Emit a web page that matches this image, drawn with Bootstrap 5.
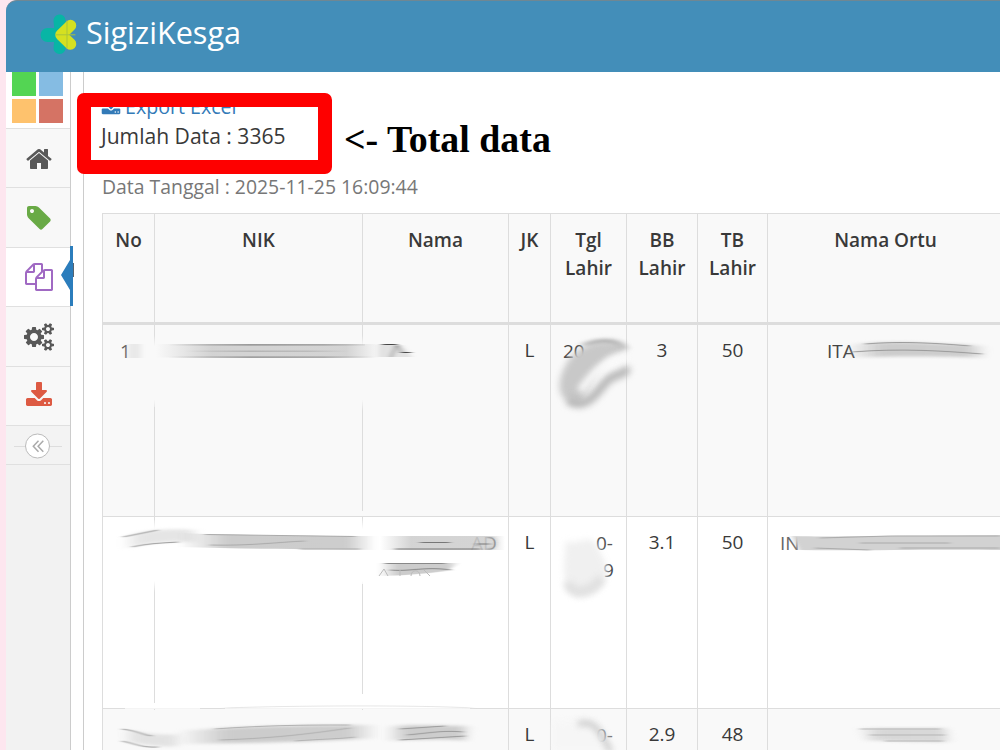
<!DOCTYPE html>
<html lang="id">
<head>
  <meta charset="UTF-8">
  <meta name="viewport" content="width=device-width, initial-scale=1">
  <title>SigiziKesga</title>
  <link href="https://cdn.jsdelivr.net/npm/bootstrap@5.3.0/dist/css/bootstrap.min.css" rel="stylesheet">
  <style>
    body { background: #fde6ef; font-family: "Open Sans", sans-serif; font-size: 20px; line-height: 27.5px; color: #393939; height: 750px; }
    .app { margin-left: 6px; height: 750px; }
    .topbar { height: 72px; background: #438eb9; border-top: 1px solid #6f8793; border-top-left-radius: 11px; padding: 0 0 5px 33px; }
    .brand-name { font-size: 30.6px; line-height: 40px; color: #fff; margin: -4px 0 0 7px; }
    .sidebar { width: 65px; background: #f2f2f2; border-right: 1px solid #ccc; }
    .shortcuts { height: 56px; background: #fff; padding: 0 7px 5px 6px; display: grid; grid-template-columns: 24px 24px; grid-template-rows: 24px 24px; gap: 3px; }
    .menu-item { height: 59.4px; background: #f8f8f8; border-top: 1px solid #e0e0e0; color: #585858; padding: 1px 0 0 2px; }
    .menu-item.current { background: #fff; }
    .marker { left: 55px; top: -2px; }
    .collapse-row { height: 40px; border-top: 1px solid #e0e0e0; border-bottom: 1px solid #e0e0e0; background: #f3f3f3; padding-top: 2px; }
    .page { margin-left: 12px; border-left: 1px solid #ccc; background: #fff; padding: 21px 0 0 17px; min-width: 0; }
    .export-link { color: #337ab7; font-size: 19.6px; }
    .count { font-size: 21.1px; margin-top: 1px; }
    .stamp { color: #777; font-size: 19.4px; margin: 23.5px 0 0 1px; }
    .data-table { width: 901px; table-layout: fixed; margin: 13px 0 0 1px; color: #393939; font-size: 19px; line-height: 27.5px; border-color: #ddd; --bs-table-striped-bg: #f9f9f9; --bs-table-striped-color: #393939; --bs-table-color: #393939; }
    .data-table th { height: 110px; font-weight: 600; padding: 13px 4px; background: #f9f9f9; border-bottom: 3px solid #ddd; }
    .data-table td { height: 192px; padding: 12px 4px; }
    .data-table tbody tr:first-child td { height: 193px; }
    .redbox { left: 77px; top: 93px; width: 255px; height: 81px; border: 14px solid #fe0000; border-radius: 7px; }
    .note { left: 344px; top: 116px; font: bold 37.9px/46px "Liberation Serif", serif; color: #000; white-space: nowrap; }
    .smears { left: 0; top: 0; }
    .smears filter { color-interpolation-filters: sRGB; }
  </style>
</head>
<body class="overflow-hidden position-relative">
  <div class="app d-flex flex-column overflow-hidden">
    <!-- Header -->
    <header class="topbar d-flex align-items-center flex-shrink-0">
      <svg width="40" height="42" viewBox="39 14 40 42" fill="none" stroke-linecap="round">
        <path d="M59.500 21.500L61 35.500L59.500 49" stroke="#08b5a5" stroke-width="12"/>
        <path d="M47.500 36H58" stroke="#08b5a5" stroke-width="14"/>
        <path d="M70.500 26.500L61 35.800L70.500 45" stroke="#d5e021" stroke-width="11.500" stroke-linejoin="round"/>
        <path d="M67 22V49M56 35.800H75" stroke="#a9c53b" stroke-width="1"/>
      </svg>
      <span class="brand-name">SigiziKesga</span>
    </header>

    <div class="d-flex flex-grow-1 bg-white">
      <!-- Sidebar -->
      <nav class="sidebar flex-shrink-0">
        <div class="shortcuts">
          <span style="background:#53d553"></span>
          <span style="background:#85bce3"></span>
          <span style="background:#fec26d"></span>
          <span style="background:#d57364"></span>
        </div>
        <div class="menu-item d-flex align-items-center justify-content-center">
          <svg width="28" height="28" viewBox="0 0 1792 1792" fill="currentColor"><path d="M1472 992v480q0 26-19 45t-45 19h-384v-384h-256v384h-384q-26 0-45-19t-19-45v-480q0-1 .5-3t.5-3l575-474 575 474q1 2 1 6zm223-69l-62 74q-8 9-21 11h-3q-13 0-21-7l-692-577-692 577q-12 8-24 7-13-2-21-11l-62-74q-8-10-7-23.500t11-21.500l719-599q32-26 76-26t76 26l244 204v-195q0-14 9-23t23-9h192q14 0 23 9t9 23v408l219 182q10 8 11 21.500t-7 23.500z"/></svg>
        </div>
        <div class="menu-item d-flex align-items-center justify-content-center">
          <svg width="28" height="28" viewBox="0 0 1792 1792" fill="#69aa46"><path d="M576 448q0-53-37.500-90.500t-90.500-37.500-90.500 37.500-37.500 90.500 37.500 90.500 90.500 37.500 90.500-37.500 37.500-90.500zm1067 576q0 53-37 90l-491 492q-39 37-91 37-53 0-90-37l-715-716q-38-37-64.500-101t-26.500-117v-416q0-52 38-90t90-38h416q53 0 117 26.500t102 64.500l715 714q37 39 37 91z"/></svg>
        </div>
        <div class="menu-item current position-relative d-flex align-items-center justify-content-center">
          <svg width="28" height="28" viewBox="0 0 1792 1792" fill="#a069c3"><path d="M1696 384q40 0 68 28t28 68v1216q0 40-28 68t-68 28h-960q-40 0-68-28t-28-68v-288h-544q-40 0-68-28t-28-68v-672q0-40 20-88t48-76l408-408q28-28 76-48t88-20h416q40 0 68 28t28 68v328q68-40 128-40h416zm-544 213l-299 299h299v-299zm-640-384l-299 299h299v-299zm196 647l316-316v-416h-384v416q0 40-28 68t-68 28h-416v640h512v-256q0-40 20-88t48-76zm956 804v-1152h-384v416q0 40-28 68t-68 28h-416v640h896z"/></svg>
          <svg class="marker position-absolute" width="14" height="60" viewBox="0 0 14 60"><path d="M9 0h3v60H9V44L0 29L9 14z" fill="#2b7dbc"/><path d="M12.500 17v14" stroke="#56636e"/></svg>
        </div>
        <div class="menu-item d-flex align-items-center justify-content-center">
          <svg width="30" height="28" viewBox="-64 0 1920 1792" fill="currentColor"><path d="M832 896q0-106-75-181t-181-75-181 75-75 181 75 181 181 75 181-75 75-181zm768 512q0-52-38-90t-90-38-90 38-38 90q0 53 37.500 90.500t90.500 37.500 90.500-37.500 37.500-90.500zm0-1024q0-52-38-90t-90-38-90 38-38 90q0 53 37.500 90.500t90.500 37.500 90.500-37.500 37.500-90.500zm-384 421v185q0 10-7 19.500t-16 10.500l-155 24q-11 35-32 76 34 48 90 115 7 11 7 20 0 12-7 19-23 30-82.500 89.500t-78.500 59.500q-11 0-21-7l-115-90q-37 19-77 31-11 108-23 155-7 24-30 24h-186q-11 0-20-7.500t-10-17.500l-23-153q-34-10-75-31l-118 89q-7 7-20 7-11 0-21-8-144-133-144-160 0-9 7-19 10-14 41-53t47-61q-23-44-35-82l-152-24q-10-1-17-9.500t-7-19.500v-185q0-10 7-19.500t16-10.500l155-24q11-35 32-76-34-48-90-115-7-11-7-20 0-12 7-20 22-30 82-89t79-59q11 0 21 7l115 90q34-18 77-32 11-108 23-154 7-24 30-24h186q11 0 20 7.500t10 17.500l23 153q34 10 75 31l118-89q8-7 20-7 11 0 21 8 144 133 144 160 0 8-7 19-12 16-42 54t-45 60q23 48 34 82l152 23q10 2 17 10.500t7 19.500zm640 533v140q0 16-149 31-12 27-30 52 51 113 51 138 0 4-4 7-122 71-124 71-8 0-46-47t-52-68q-20 2-30 2t-30-2q-14 21-52 68t-46 47q-2 0-124-71-4-3-4-7 0-25 51-138-18-25-30-52-149-15-149-31v-140q0-16 149-31 13-29 30-52-51-113-51-138 0-4 4-7 4-2 35-20t59-34 30-16q8 0 46 46.500t52 67.500q20-2 30-2t30 2q51-71 92-112l6-2q4 0 124 70 4 3 4 7 0 25-51 138 17 23 30 52 149 15 149 31zm0-1024v140q0 16-149 31-12 27-30 52 51 113 51 138 0 4-4 7-122 71-124 71-8 0-46-47t-52-68q-20 2-30 2t-30-2q-14 21-52 68t-46 47q-2 0-124-71-4-3-4-7 0-25 51-138-18-25-30-52-149-15-149-31v-140q0-16 149-31 13-29 30-52-51-113-51-138 0-4 4-7 4-2 35-20t59-34 30-16q8 0 46 46.500t52 67.500q20-2 30-2t30 2q51-71 92-112l6-2q4 0 124 70 4 3 4 7 0 25-51 138 17 23 30 52 149 15 149 31z"/></svg>
        </div>
        <div class="menu-item d-flex align-items-center justify-content-center">
          <svg width="28" height="28" viewBox="0 0 1792 1792" fill="#dd5a43"><path id="dl" d="M1344 1344q0-26-19-45t-45-19-45 19-19 45 19 45 45 19 45-19 19-45zm256 0q0-26-19-45t-45-19-45 19-19 45 19 45 45 19 45-19 19-45zm128-224v320q0 40-28 68t-68 28h-1472q-40 0-68-28t-28-68v-320q0-40 28-68t68-28h465l135 136q58 56 136 56t136-56l136-136h464q40 0 68 28t28 68zm-325-569q17 41-14 70l-448 448q-18 19-45 19t-45-19l-448-448q-31-29-14-70 17-39 59-39h256v-448q0-26 19-45t45-19h256q26 0 45 19t19 45v448h256q42 0 59 39z"/></svg>
        </div>
        <div class="collapse-row d-flex align-items-center justify-content-center">
          <svg width="50" height="28" viewBox="0 0 50 28" fill="none"><path d="M1 14.500H49" stroke="#ddd"/><circle cx="24.500" cy="14" r="12" fill="#fff" stroke="#bbb"/><path d="M25.500 8.800L20.300 14.300L25.500 19.800M30.300 8.800L25.100 14.300L30.300 19.800" stroke="#aaa" stroke-width="1.500"/></svg>
        </div>
      </nav>

      <!-- Content -->
      <main class="page flex-grow-1">
        <div class="export-link d-flex align-items-center">
          <svg width="20" height="20" viewBox="0 0 1792 1792" fill="currentColor"><use href="#dl"/></svg>
          <span class="ms-1">Export Excel</span>
        </div>
        <div class="count">Jumlah Data : 3365</div>
        <div class="stamp">Data Tanggal : 2025-11-25 16:09:44</div>

        <table class="table table-bordered table-striped data-table text-center align-top">
          <colgroup>
            <col style="width:52px"><col style="width:208px"><col style="width:146px"><col style="width:42px">
            <col style="width:76px"><col style="width:71px"><col style="width:70px"><col style="width:236px">
          </colgroup>
          <thead class="align-top">
            <tr><th>No</th><th>NIK</th><th>Nama</th><th>JK</th><th>Tgl Lahir</th><th>BB Lahir</th><th>TB Lahir</th><th>Nama Ortu</th></tr>
          </thead>
          <tbody>
            <tr><td></td><td></td><td></td><td>L</td><td></td><td>3</td><td>50</td><td></td></tr>
            <tr><td></td><td></td><td></td><td>L</td><td></td><td>3.1</td><td>50</td><td></td></tr>
            <tr><td></td><td></td><td></td><td>L</td><td></td><td>2.9</td><td>48</td><td></td></tr>
          </tbody>
        </table>
      </main>
    </div>
  </div>

  <!-- Smudged personal data, drawn over the cells -->
  <svg class="smears position-absolute" width="1000" height="750" viewBox="0 0 1000 750" fill="none" font-family="Open Sans, sans-serif" font-size="19">
    <defs>
      <filter id="b1" filterUnits="userSpaceOnUse" x="100" y="320" width="910" height="440"><feGaussianBlur stdDeviation="2.500 0.700"/></filter>
      <filter id="b2" filterUnits="userSpaceOnUse" x="100" y="320" width="910" height="440"><feGaussianBlur stdDeviation="4 1.500"/></filter>
      <filter id="b3" filterUnits="userSpaceOnUse" x="540" y="320" width="110" height="440"><feGaussianBlur stdDeviation="3.400"/></filter>
      <linearGradient id="fade"><stop offset="0" stop-color="#ccc" stop-opacity="0"/><stop offset=".25" stop-color="#ccc"/><stop offset=".85" stop-color="#cdcdcd"/><stop offset="1" stop-color="#ccc" stop-opacity="0"/></linearGradient>
      <linearGradient id="dark"><stop offset="0" stop-color="#777" stop-opacity="0"/><stop offset=".4" stop-color="#888"/><stop offset=".75" stop-color="#999"/><stop offset="1" stop-color="#999" stop-opacity="0"/></linearGradient>
      <linearGradient id="wipe" x2="0" y2="1"><stop offset="0" stop-color="#f9f9f9" stop-opacity="0"/><stop offset=".15" stop-color="#f9f9f9"/><stop offset=".85" stop-color="#f9f9f9"/><stop offset="1" stop-color="#f9f9f9" stop-opacity="0"/></linearGradient>
      <linearGradient id="wipew" x2="0" y2="1"><stop offset="0" stop-color="#fff" stop-opacity="0"/><stop offset=".15" stop-color="#fff"/><stop offset=".85" stop-color="#fff"/><stop offset="1" stop-color="#fff" stop-opacity="0"/></linearGradient>
    </defs>
    <!-- gaps in the column lines -->
    <path d="M151 335h7v72h-7zM359 335h7v76h-7z" fill="url(#wipe)"/>
    <path d="M151 710h7v50h-7zM359 710h7v50h-7zM360 511h5v5h-5z" fill="#f9f9f9"/>
    <path d="M151 520h7v72h-7zM359 518h7v66h-7z" fill="url(#wipew)"/>
    <path d="M151 703h7v5h-7zM359 694h7v14h-7z" fill="#fff"/>
    <path d="M125 708.500H200M225 708.500H470" stroke="#f4f4f4" stroke-width="1.200"/>
    <path d="M225 708C290 705.500 420 705 472 708" stroke="#e6e6e6" filter="url(#b1)"/>

    <!-- row 1 -->
    <text x="120" y="358" fill="#555">1</text>
    <path d="M128 344h13v14h-13z" fill="#e9e9e9" filter="url(#b1)"/>
    <path d="M156 344H380V357.500H156z" fill="url(#fade)" opacity=".85"/>
    <path d="M168 344.200H365V345.500H168zM168 356.500H375V357.700H168z" fill="url(#dark)"/>
    <path d="M185 350.500H350V352H185z" fill="url(#dark)" opacity=".4"/>
    <path d="M378 345L402 345L412 357H378z" fill="#e2e2e2" filter="url(#b1)"/>
    <path d="M382 344.500H397M401 352.500H411M397 345L402 353M396 346L391 357" stroke="#444" filter="url(#b1)"/>
    <text x="563" y="358" fill="#444">20</text>
    <path d="M570 358C580 344 610 335 625 346C629 352 620 353 610 357C598 366 592 382 585 397C581 408 564 405 560 391C558 381 562 370 570 358z" fill="#c8c8c8" filter="url(#b3)"/>
    <path d="M568 400C588 412 598 389 608 380C616 373 625 376 627 367" stroke="#b9b9b9" stroke-width="9" filter="url(#b3)"/>
    <path d="M580 391C590 379 597 363 628 356" stroke="#fafafa" stroke-width="8" filter="url(#b3)"/>
    <path d="M584 345C600 339 617 339 625 349" stroke="#b5b5b5" stroke-width="4" filter="url(#b2)"/>
    <text x="827" y="358" fill="#444">ITA</text>
    <path d="M846 345C885 340 930 343 986 346L988 358C930 356 890 356 846 358z" fill="url(#fade)" filter="url(#b2)"/>
    <path d="M852 352C900 348 945 351 982 354M865 344C900 341 935 343 970 346" stroke="#999" filter="url(#b1)"/>

    <!-- row 2 -->
    <path d="M121 538C145 530 165 528 200 530V542C160 541 145 543 122 550z" fill="url(#fade)" opacity=".5" filter="url(#b2)"/>
    <path d="M123 537L158 530M132 547C150 543 165 543 178 542" stroke="#999" filter="url(#b1)"/>
    <path d="M178 533C230 535 300 536 376 536V550C300 549 240 549 178 547z" fill="url(#fade)" filter="url(#b1)"/>
    <path d="M205 534.500L355 536.500M300 549H360M210 545C250 546 280 542 305 541" stroke="#aaa" filter="url(#b1)"/>
    <text x="471" y="550" fill="#777">AD</text>
    <path d="M380 536H505V550H380z" fill="url(#fade)" opacity=".85"/>
    <path d="M420 542.500H450M476 544H490M490 537C497 539 496 548 489 549M395 549H480" stroke="#777" filter="url(#b1)"/>
    <path d="M379 563H460L446 571C430 573 402 576 378 576z" fill="url(#fade)" filter="url(#b1)"/>
    <path d="M385 563.500H445M390 570C410 572 425 566 451 570" stroke="#888" filter="url(#b1)"/>
    <path d="M379 576L384 569L388 576M400 570V576M411 576C411 569 420 569 420 576M424 570L430 576" stroke="#bbb"/>
    <text x="596" y="550" fill="#555">0-</text>
    <text x="603" y="577" fill="#444">9</text>
    <path d="M566 540C574 548 584 534 595 542L607 566C608 583 596 598 578 596C562 591 563 570 566 540z" fill="#f0f0f0" filter="url(#b3)"/>
    <path d="M568 582C571 595 588 596 602 578" stroke="#e0e0e0" stroke-width="10" filter="url(#b3)"/>
    <text x="780" y="550" fill="#666">IN</text>
    <path d="M792 536C820 537 870 536 1005 535V550C920 549 860 551 799 550z" fill="#d2d2d2" filter="url(#b1)"/>
    <path d="M820 538L890 536H1000M815 548L870 550M860 543H950M900 548H1000" stroke="#aaa" filter="url(#b1)"/>

    <!-- row 3 -->
    <path d="M121 729C140 732 155 736 182 734V746C155 748 140 743 122 741z" fill="url(#fade)" opacity=".5" filter="url(#b2)"/>
    <path d="M122 729C138 731 143 735 152 736M122 741C136 744 143 748 158 747" stroke="#999" filter="url(#b1)"/>
    <path d="M177 731C230 727 290 725 378 725V738C320 742 250 743 180 744z" fill="url(#fade)" filter="url(#b2)"/>
    <path d="M215 729C270 725 310 725 350 725M220 740C280 738 315 733 350 728M295 741C320 739 340 739 355 737" stroke="#b0b0b0" filter="url(#b1)"/>
    <path d="M385 727C410 724 435 726 472 726L468 741C440 738 410 740 385 741z" fill="url(#fade)" filter="url(#b2)"/>
    <path d="M407 735C430 733 443 730 463 732M400 729L445 726M400 740L465 736" stroke="#999" filter="url(#b1)"/>
    <text x="596" y="742" fill="#777">0-</text>
    <path d="M553 722C575 720 590 718 599 726L609 750H553z" fill="#f6f6f6" filter="url(#b3)"/>
    <path d="M578 724C596 719 600 733 611 752" stroke="#c8c8c8" stroke-width="5" filter="url(#b3)"/>
    <path d="M856 728H948L954 742C920 743 890 740 865 741z" fill="url(#fade)" opacity=".75" filter="url(#b2)"/>
    <path d="M860 729H940M870 735H945M885 741H943" stroke="#b5b5b5" filter="url(#b1)"/>
  </svg>

  <!-- Annotation -->
  <div class="redbox position-absolute"></div>
  <div class="note position-absolute">&lt;- Total data</div>

  <script src="https://cdn.jsdelivr.net/npm/bootstrap@5.3.0/dist/js/bootstrap.bundle.min.js"></script>
</body>
</html>
